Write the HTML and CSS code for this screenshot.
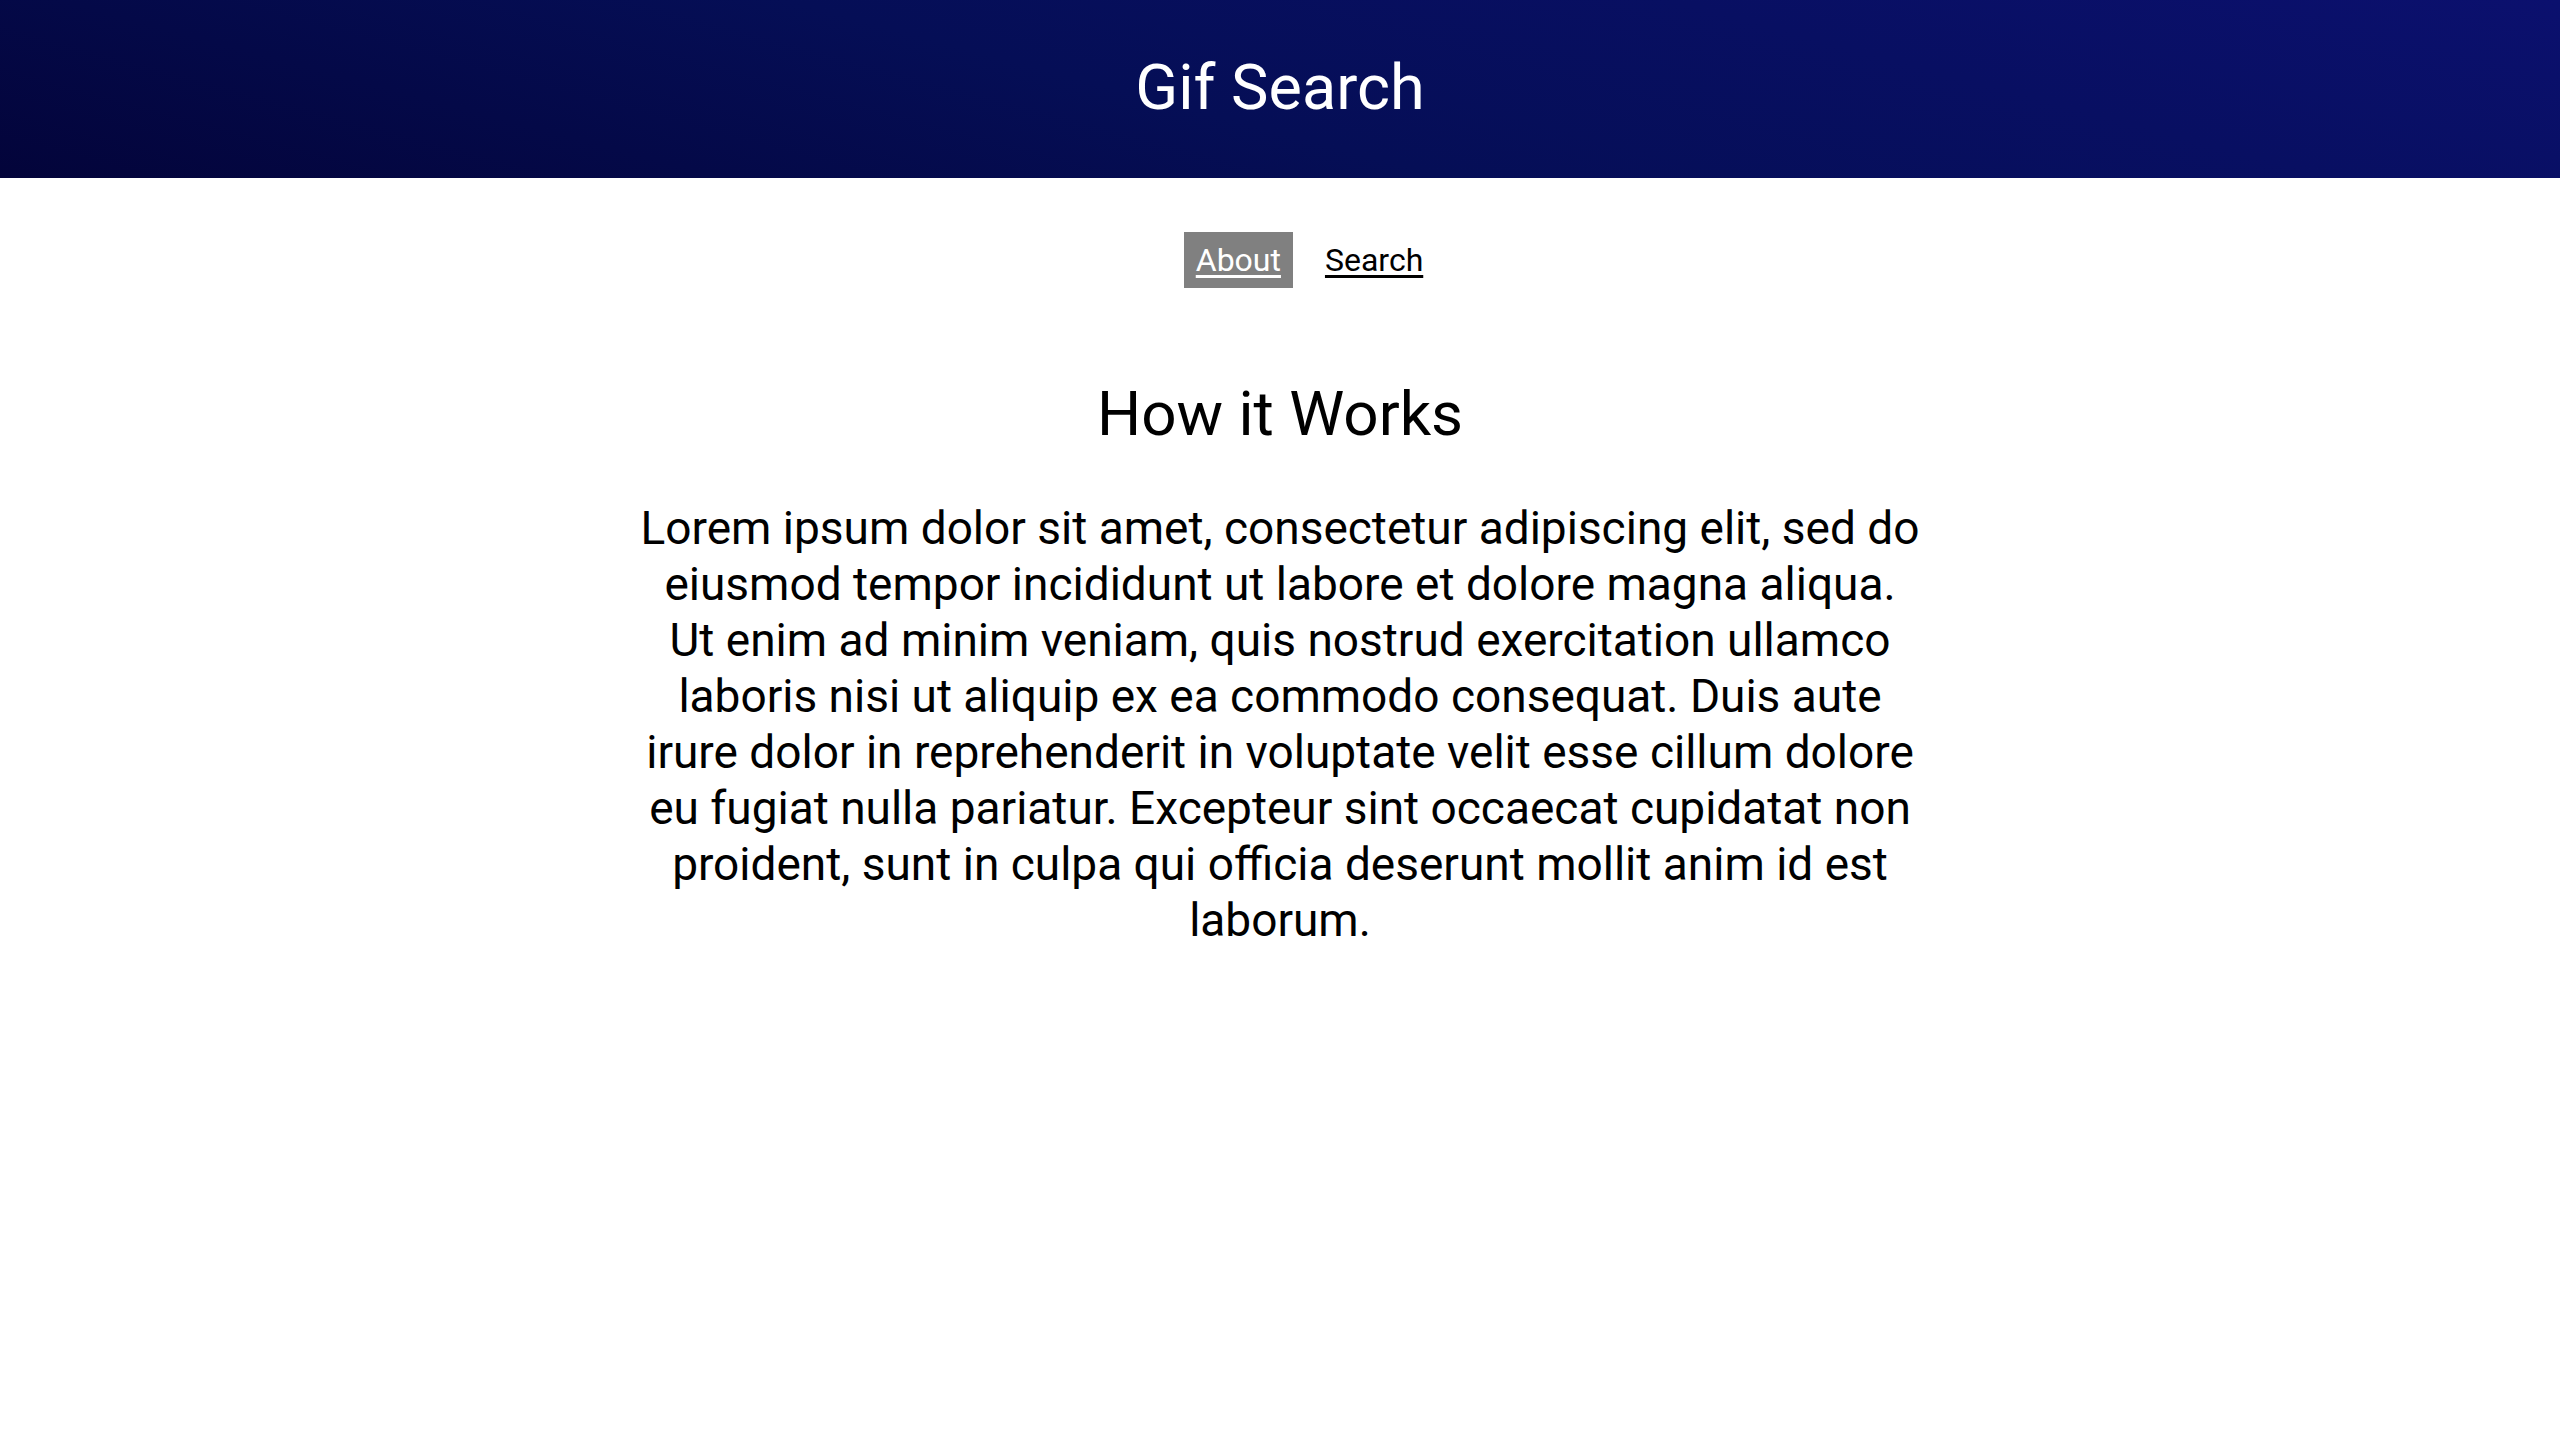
FILE: index.html
```html
<!DOCTYPE html>
<html lang="en">
<head>
<meta charset="utf-8">
<title>Gif Search</title>
<link rel="stylesheet" href="styles.css">
</head>
<body>
<header class="banner">
  <h1 class="banner-title">Gif Search</h1>
</header>
<nav class="nav">
  <a class="nav-link active" href="#">About</a>
  <a class="nav-link" href="#">Search</a>
</nav>
<main class="about">
  <h2 class="about-title">How it Works</h2>
  <p class="about-text">Lorem ipsum dolor sit amet, consectetur adipiscing elit, sed do eiusmod tempor incididunt ut labore et dolore magna aliqua. Ut enim ad minim veniam, quis nostrud exercitation ullamco laboris nisi ut aliquip ex ea commodo consequat. Duis aute irure dolor in reprehenderit in voluptate velit esse cillum dolore eu fugiat nulla pariatur. Excepteur sint occaecat cupidatat non proident, sunt in culpa qui officia deserunt mollit anim id est laborum.</p>
</main>
</body>
</html>
```

FILE: styles.css
```css
html, body {
  margin: 0;
  padding: 0;
  background: #ffffff;
  color: #000000;
  font-family: Roboto, "Noto Sans", "Liberation Sans", sans-serif;
}

.banner {
  height: 178px;
  display: flex;
  align-items: center;
  justify-content: center;
  background: linear-gradient(15deg, #03043a 0%, #050e56 45%, #0b106e 100%);
}

.banner-title {
  margin: 0;
  color: #ffffff;
  font-size: 63px;
  font-weight: 400;
  line-height: 1;
  padding-bottom: 4px;
}

.nav {
  display: flex;
  justify-content: center;
  gap: 20px;
  margin-top: 54px;
  padding-left: 59px;
}

.nav-link {
  display: block;
  color: #000000;
  font-size: 32px;
  line-height: 40px;
  padding: 8px 12px;
  text-decoration: underline;
  text-underline-offset: 4px;
}

.nav-link.active {
  background: #808080;
  color: #ffffff;
}

.about {
  display: flex;
  flex-direction: column;
  align-items: center;
  text-align: center;
}

.about-title {
  margin: 86px 0 0;
  font-size: 62px;
  font-weight: 400;
  line-height: 80px;
}

.about-text {
  margin: 46px 0 0;
  max-width: 1282px;
  font-size: 46px;
  line-height: 56px;
}
```
